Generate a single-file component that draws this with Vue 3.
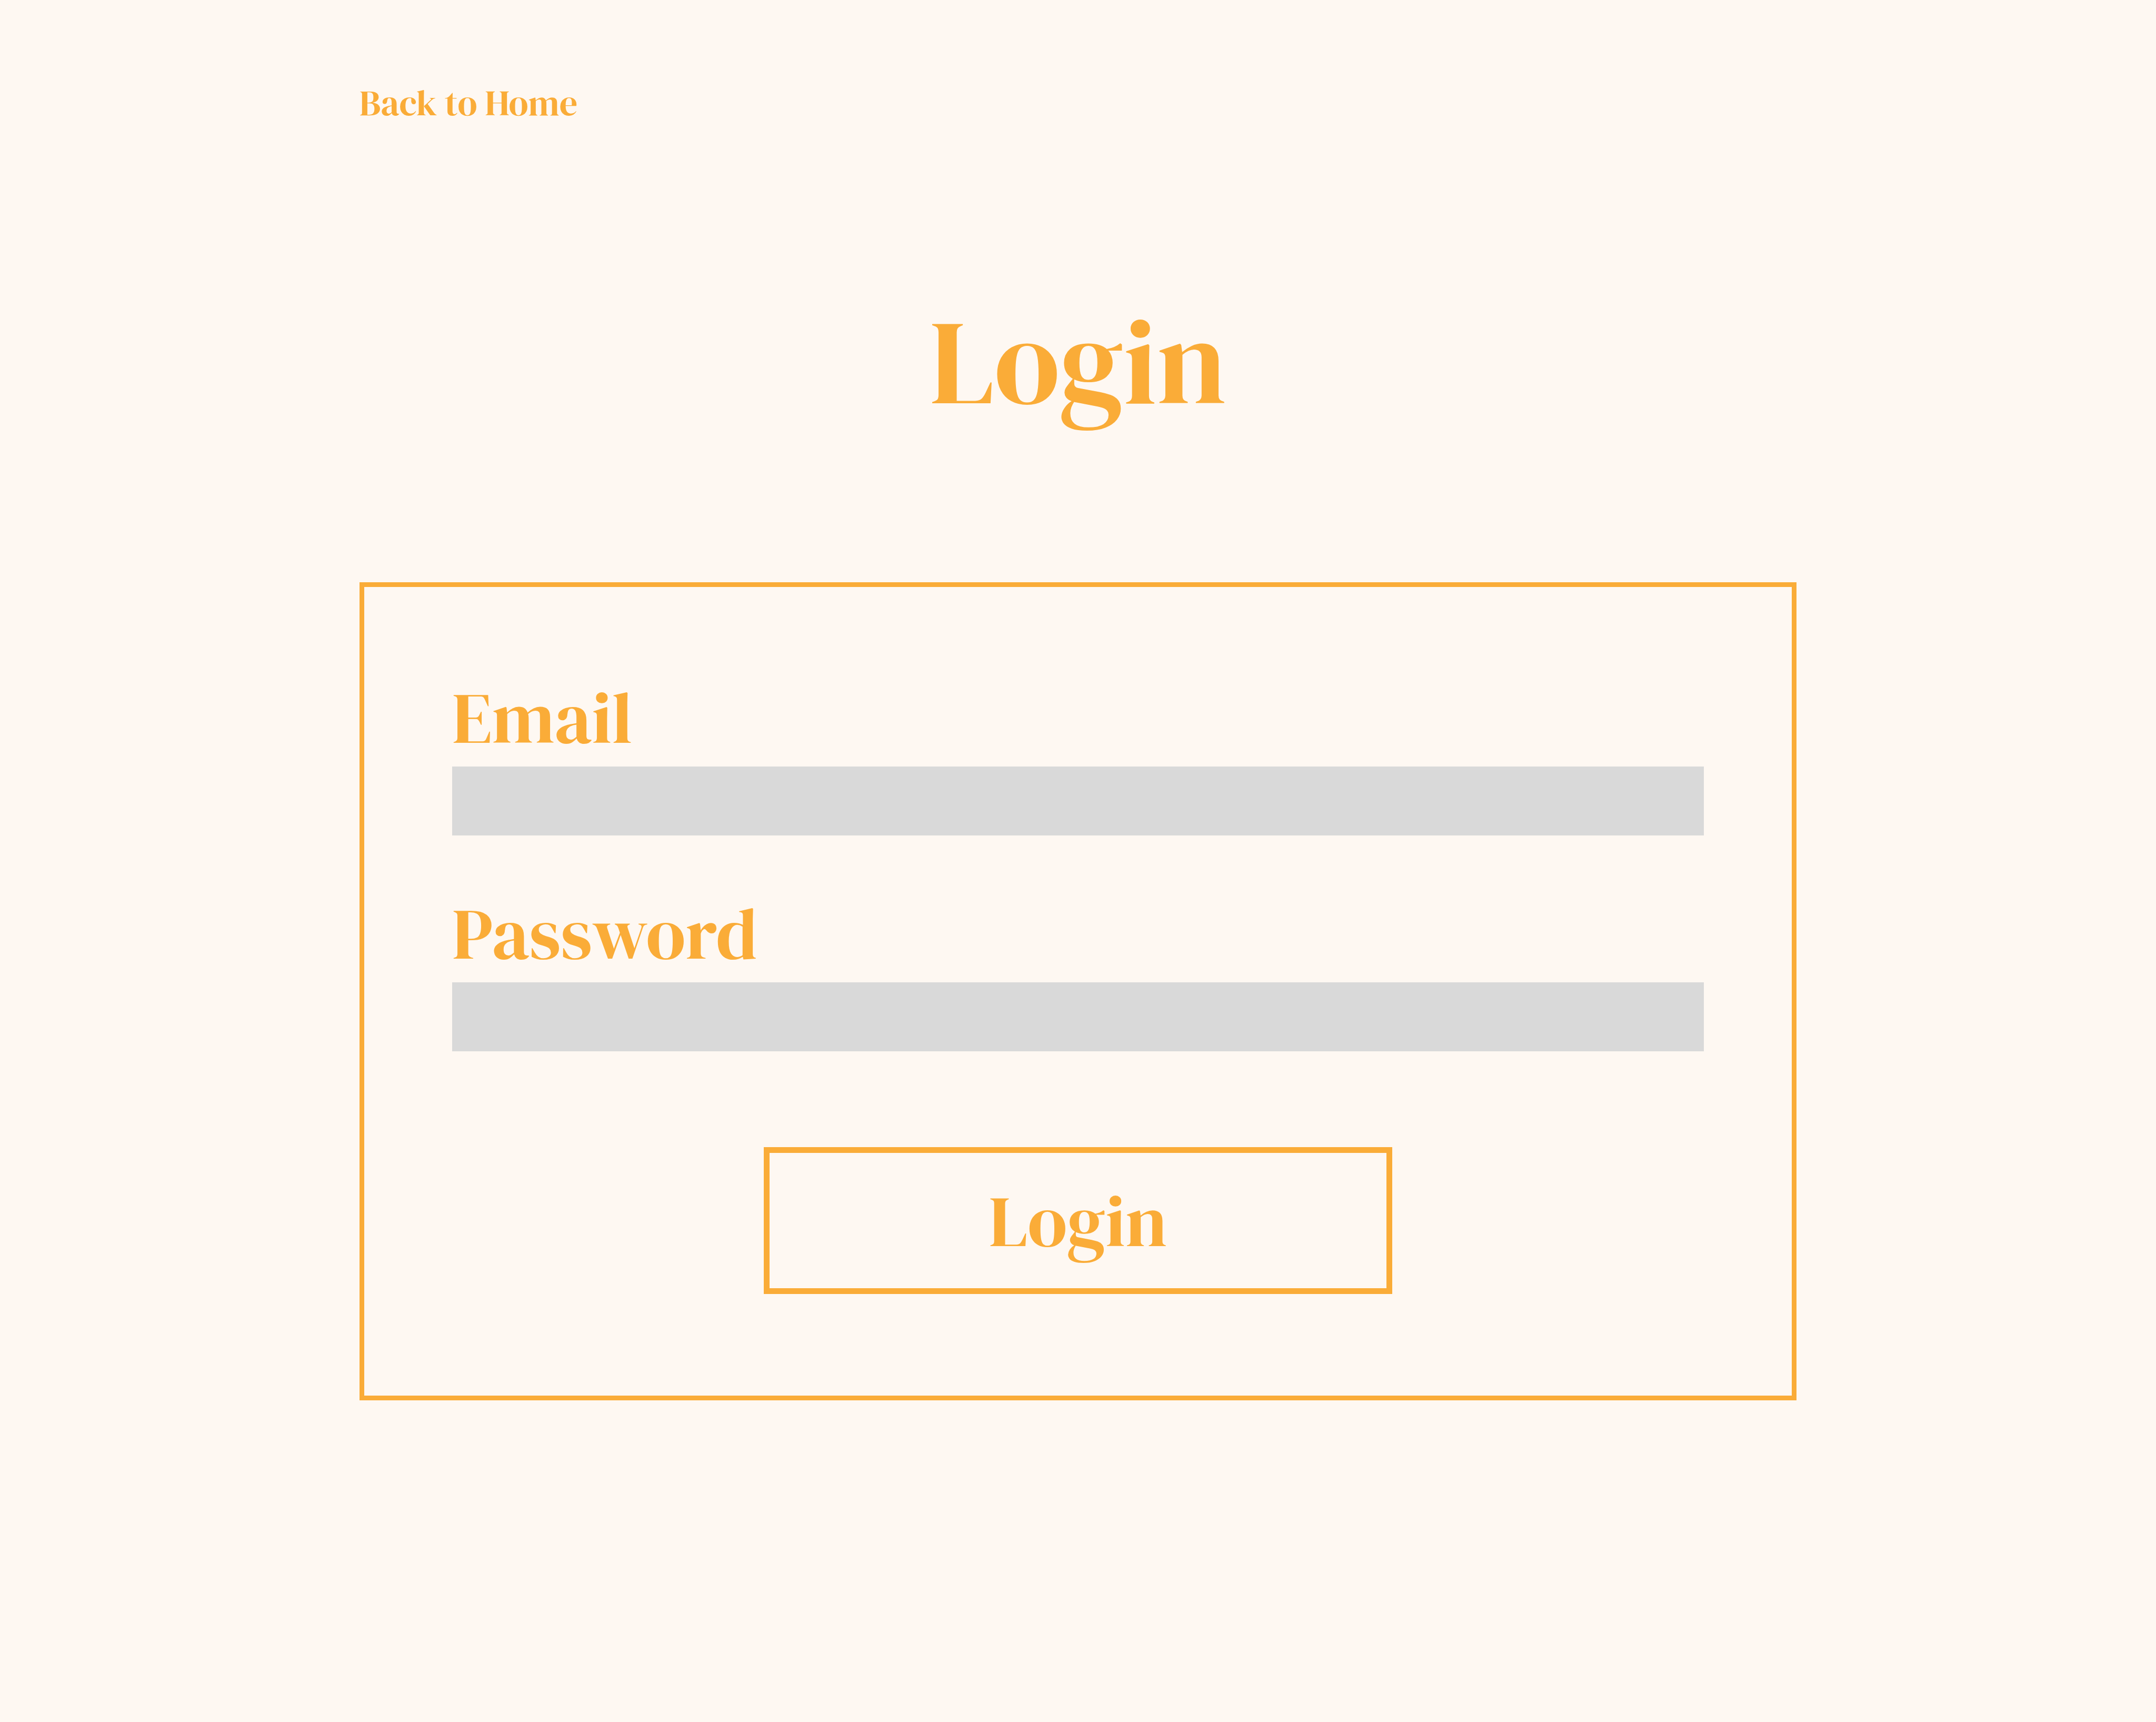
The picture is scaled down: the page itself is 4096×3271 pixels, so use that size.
<script setup>
import { ref } from 'vue'

const email = ref('')
const password = ref('')
</script>

<template>
  <div class="page">
    <nav class="nav">
      <a class="back" href="/">Back to Home</a>
    </nav>
    <main>
      <h1 class="title">Login</h1>
      <form class="card" @submit.prevent>
        <div class="field">
          <label for="email">Email</label>
          <input id="email" v-model="email" type="email" autocomplete="email" />
        </div>
        <div class="field">
          <label for="password">Password</label>
          <input id="password" v-model="password" type="password" autocomplete="current-password" />
        </div>
        <button class="submit" type="submit">Login</button>
      </form>
    </main>
  </div>
</template>

<style>
body {
  background: #fef8f2;
}
</style>

<style scoped>
.page {
  box-sizing: border-box;
  min-height: 100vh;
  padding: 148px calc(100% / 6);
  color: #faac38;
  font-family: "DM Serif Display", "Liberation Serif", serif;
  font-weight: 400;
}

.nav {
  display: flex;
  margin-bottom: 290px;
}

.back {
  color: inherit;
  font-size: 68px;
  line-height: 96px;
  text-decoration: none;
}

.title {
  margin: 0 0 268px;
  font-size: 228px;
  font-weight: inherit;
  line-height: 304px;
  text-align: center;
}

.card {
  display: flex;
  flex-direction: column;
  gap: 97px;
  padding: 159px 167px 193px;
  border: 9px solid #faac38;
}

.field {
  display: flex;
  flex-direction: column;
  gap: 4px;
}

.field label {
  font-size: 137px;
  line-height: 178px;
}

.field input {
  box-sizing: border-box;
  width: 100%;
  height: 131px;
  padding: 0 32px;
  border: 0;
  border-radius: 0;
  background: #d9d9d9;
  color: #333;
  font-family: inherit;
  font-size: 68px;
}

.submit {
  box-sizing: border-box;
  align-self: center;
  width: 100%;
  max-width: 1194px;
  margin-top: 85px;
  padding: 40px 0 39px;
  border: 11px solid #faac38;
  border-radius: 0;
  background: transparent;
  color: inherit;
  font-family: inherit;
  font-size: 137px;
  font-weight: inherit;
  line-height: 178px;
  cursor: pointer;
}
</style>
